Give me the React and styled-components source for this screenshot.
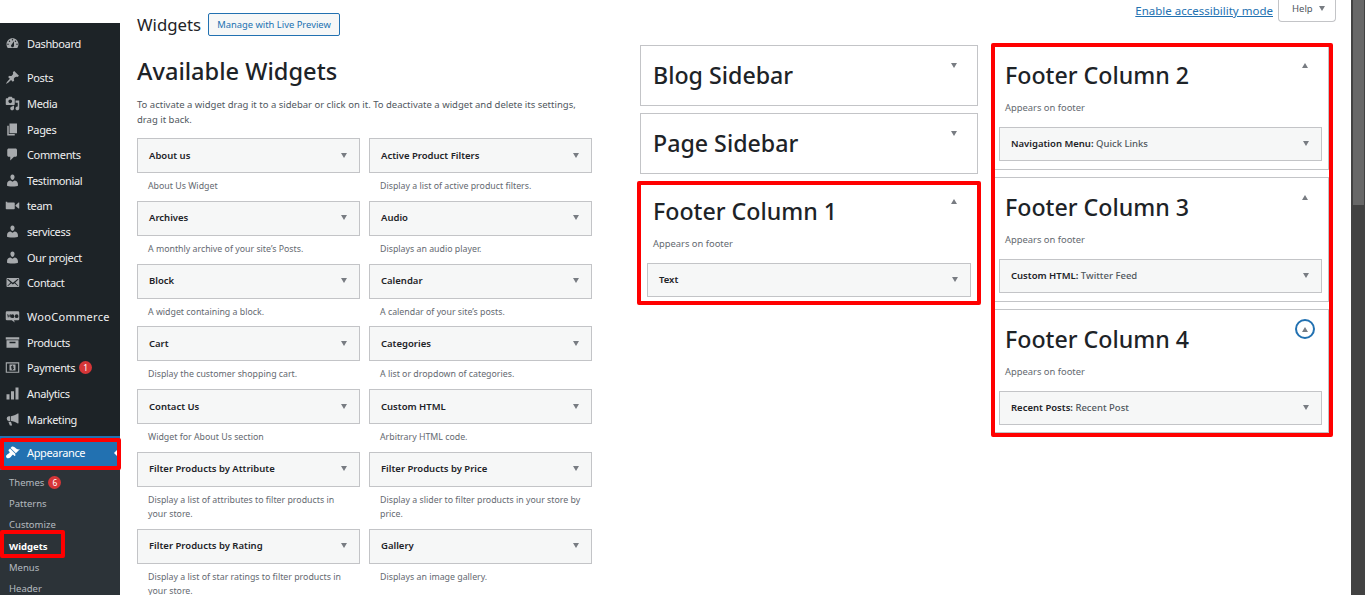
import React from "react";
import styled, { createGlobalStyle } from "styled-components";

const FONT = `"Noto Sans", "Liberation Sans", sans-serif`;

const Global = createGlobalStyle`
  html, body { margin: 0; padding: 0; height: 595px; overflow: hidden; background: #fff; }
  * { box-sizing: border-box; }
  body { font-family: ${FONT}; color: #1d2327; }
`;

const Page = styled.div`
  position: relative;
  display: flex;
  width: 1365px;
  height: 595px;
  overflow: hidden;
`;

const Sidebar = styled.nav`
  flex: 0 0 120px;
  margin-top: 23px;
  background: #1d2327;
  display: flex;
  flex-direction: column;
  padding-top: 8px;
  overflow: hidden;
`;

const MenuItem = styled.div`
  display: flex;
  flex-shrink: 0;
  align-items: center;
  height: ${p => (p.$active ? "34px" : "25.6px")};
  margin-top: ${p => (p.$gap ? p.$gap : 0)}px;
  padding-left: 5px;
  font-size: 11px;
  letter-spacing: ${p => p.$track ?? -0.35}px;
  color: ${p => (p.$active ? "#fff" : "#f0f0f1")};
  background: ${p => (p.$active ? "#2271b1" : "transparent")};
  position: relative;
  svg { flex: 0 0 15px; margin-right: 7px; fill: ${p => (p.$active ? "#fff" : "#a7aaad")}; }
`;

const ActiveArrow = styled.span`
  position: absolute;
  right: 0;
  top: 50%;
  margin-top: -6px;
  border: 6px solid transparent;
  border-right-color: #fff;
  border-left-width: 0;
`;

const Badge = styled.span`
  display: inline-flex;
  align-items: center;
  justify-content: center;
  width: 13px;
  height: 13px;
  margin-left: 4px;
  border-radius: 50%;
  background: #d63638;
  color: #fff;
  font-size: 8.5px;
  letter-spacing: 0;
`;

const Submenu = styled.div`
  flex: 0 0 auto;
  background: #2c3338;
  padding-top: 2px;
  min-height: 140px;
`;

const SubItem = styled.div`
  display: flex;
  align-items: center;
  height: 21.2px;
  padding-left: 9px;
  font-size: 9.5px;
  font-weight: ${p => (p.$current ? 700 : 400)};
  color: ${p => (p.$current ? "#fff" : "rgba(240,246,252,.7)")};
`;

const Main = styled.main`
  flex: 1;
  display: flex;
  min-width: 0;
  padding-left: 17px;
  position: relative;
`;

const LeftColumn = styled.section`
  flex: 0 0 455px;
`;

const PageHead = styled.header`
  display: flex;
  align-items: center;
  height: 36px;
  padding-top: 13px;
  gap: 7px;
`;

const PageTitle = styled.h1`
  margin: -1px 0 0;
  font-size: 16.8px;
  font-weight: 400;
`;

const LiveButton = styled.span`
  display: inline-flex;
  align-items: center;
  height: 23px;
  padding: 0 8px;
  border: 1px solid #2271b1;
  border-radius: 2px;
  background: #f6f7f7;
  color: #2271b1;
  font-size: 9.4px;
`;

const SectionTitle = styled.h2`
  margin: 18px 0 0;
  font-size: 23.6px;
  line-height: 34px;
  font-weight: 500;
`;

const Intro = styled.p`
  margin: 9px 0 11px;
  font-size: 9.5px;
  line-height: 15px;
  color: #50575e;
  width: 455px;
`;

const WidgetGrid = styled.div`
  display: grid;
  grid-template-columns: 223px 223px;
  column-gap: 9px;
`;

const WidgetCell = styled.div`
  height: ${p => (p.$tall ? "77px" : "62.8px")};
`;

const WidgetBar = styled.div`
  display: flex;
  align-items: center;
  justify-content: space-between;
  height: ${p => p.$h || 35}px;
  padding: 0 12px 1px 11px;
  background: #f6f7f7;
  border: 1px solid #c3c4c7;
  font-size: 9.5px;
  font-weight: 600;
  color: #1d2327;
`;

const WidgetInstance = styled.span`
  font-weight: 500;
  color: #50575e;
`;

const WidgetDesc = styled.p`
  margin: 6px 0 0;
  padding: 0 8px 0 11px;
  font-size: 8.8px;
  line-height: 14px;
  color: #646970;
`;

const Caret = styled.span`
  width: 0;
  height: 0;
  border-left: 3.5px solid transparent;
  border-right: 3.5px solid transparent;
  ${p => (p.$up ? "border-bottom: 5px solid #787c82;" : "border-top: 5px solid #787c82;")}
`;

const Areas = styled.section`
  display: flex;
  padding-top: 45px;
  gap: 14px;
  margin-left: 48px;
`;

const AreaColumn = styled.div`
  flex: 0 0 ${p => p.$w}px;
  display: flex;
  flex-direction: column;
  gap: 7px;
`;

const AreaBox = styled.div`
  position: relative;
  border: 1px solid #c3c4c7;
  height: ${p => p.$h}px;
  padding: 12px 6px 0;
`;

const AreaTitle = styled.h3`
  margin: 0;
  padding-left: 6px;
  font-size: 23.2px;
  line-height: 35px;
  font-weight: 500;
`;

const AreaDesc = styled.p`
  margin: 7px 0 0;
  padding-left: 6px;
  font-size: 9.4px;
  line-height: 15px;
  color: #646970;
`;

const AreaWidgets = styled.div`
  margin-top: 12px;
`;

const Toggle = styled.span`
  position: absolute;
  top: 9px;
  right: 13px;
  width: 20px;
  height: 20px;
  border-radius: 50%;
  display: flex;
  align-items: center;
  justify-content: center;
  border: ${p => (p.$focus ? "2px solid #2271b1" : "0")};
`;

const TopLinks = styled.div`
  position: absolute;
  top: 0;
  right: 29px;
  display: flex;
  gap: 5px;
`;

const A11yLink = styled.a`
  font-size: 11.5px;
  line-height: 22px;
  color: #2271b1;
  text-decoration: underline;
`;

const HelpTab = styled.span`
  display: flex;
  align-items: center;
  gap: 6px;
  width: 58px;
  height: 22px;
  padding: 0 0 4px 13px;
  border: 1px solid #c3c4c7;
  border-top: 0;
  border-radius: 0 0 4px 4px;
  font-size: 9.5px;
  color: #50575e;
`;

const Scrollbar = styled.div`
  position: absolute;
  top: 0;
  right: 0;
  bottom: 0;
  width: 14px;
  background: #424242;
`;

const Thumb = styled.div`
  height: 205px;
  margin: 0 1px 0 2px;
  background: #686868;
`;

const Highlight = styled.div`
  position: absolute;
  left: ${p => p.$x}px;
  top: ${p => p.$y}px;
  width: ${p => p.$w}px;
  height: ${p => p.$h}px;
  border: 4px solid #f00;
  border-radius: 2px;
  pointer-events: none;
`;

const Ic = ({ d, children }) => (
  <svg width="15" height="15" viewBox="0 0 20 20">
    {d ? <path d={d} /> : children}
  </svg>
);

const PERSON = "M10 9.25c-2.27 0-2.73-3.44-2.73-3.44C7 4.02 7.82 2 9.97 2c2.16 0 2.98 2.02 2.71 3.81 0 0-.41 3.44-2.68 3.44zm0 2.57L12.72 10c2.39 0 4.52 2.33 4.52 4.53v2.49s-3.65 1.13-7.24 1.13c-3.65 0-7.24-1.13-7.24-1.13v-2.49c0-2.25 1.94-4.48 4.47-4.48z";

const ICONS = {
  dashboard: <Ic d="M3.76 16h12.48c1.1-1.37 1.76-3.11 1.76-5 0-4.42-3.58-8-8-8s-8 3.58-8 8c0 1.89.66 3.63 1.76 5zM10 4c.55 0 1 .45 1 1s-.45 1-1 1-1-.45-1-1 .45-1 1-1zM6 6c.55 0 1 .45 1 1s-.45 1-1 1-1-.45-1-1 .45-1 1-1zm8 0c.55 0 1 .45 1 1s-.45 1-1 1-1-.45-1-1 .45-1 1-1zm-5.37 5.55L12 7v6c0 1.1-.9 2-2 2s-2-.9-2-2c0-.57.24-1.08.63-1.45zM4 10c.55 0 1 .45 1 1s-.45 1-1 1-1-.45-1-1 .45-1 1-1zm12 0c.55 0 1 .45 1 1s-.45 1-1 1-1-.45-1-1 .45-1 1-1z" />,
  pin: <Ic d="M10.44 3.02l1.82-1.82 6.36 6.35-1.83 1.82c-1.05-.68-2.48-.57-3.41.36l-.75.75c-.92.93-1.04 2.35-.35 3.41l-1.83 1.82-2.41-2.41-2.8 2.79c-.42.42-3.38 2.71-3.8 2.29s1.86-3.39 2.28-3.81l2.79-2.79L4.1 9.36l1.83-1.82c1.05.69 2.48.57 3.4-.36l.75-.75c.93-.92 1.05-2.35.36-3.41z" />,
  media: <Ic d="M13 11V4c0-.55-.45-1-1-1h-1.67L9 1H5L3.67 3H2c-.55 0-1 .45-1 1v7c0 .55.45 1 1 1h10c.55 0 1-.45 1-1zM7 4.5c1.38 0 2.5 1.12 2.5 2.5S8.38 9.5 7 9.5 4.5 8.38 4.5 7 5.62 4.5 7 4.5zM14 6h5v10.5c0 1.38-1.12 2.5-2.5 2.5S14 17.88 14 16.5s1.12-2.5 2.5-2.5c.17 0 .34.02.5.05V9h-3V6zm-4 8.05V13h2v3.5c0 1.38-1.12 2.5-2.5 2.5S7 17.88 7 16.5 8.12 14 9.5 14c.17 0 .34.02.5.05z" />,
  page: <Ic d="M6 15V2h10v13H6zm-1 1h8v2H3V5h2v11z" />,
  comment: <Ic d="M5 2h9c1.1 0 2 .9 2 2v7c0 1.1-.9 2-2 2h-2l-5 5v-5H5c-1.1 0-2-.9-2-2V4c0-1.1.9-2 2-2z" />,
  person: <Ic d={PERSON} />,
  video: <Ic d="M1 5h2v1h9c.6 0 1 .4 1 1v7c0 .6-.4 1-1 1H2c-.6 0-1-.4-1-1zM14 9.5l4-3.5h1v8h-1l-4-3.5z" />,
  mail: <Ic d="M19 14.5v-9c0-.83-.67-1.5-1.5-1.5H3.49c-.83 0-1.5.67-1.5 1.5v9c0 .83.67 1.5 1.5 1.5H17.5c.83 0 1.5-.67 1.5-1.5zm-1.31-9.11c.33.33.15.67-.03.84L13.6 9.95l3.9 4.06c.12.14.2.36.06.51-.13.16-.43.15-.56.05l-4.37-3.73-2.14 1.95-2.13-1.95-4.37 3.73c-.13.1-.43.11-.56-.05-.14-.15-.06-.37.06-.51l3.9-4.06-4.06-3.72c-.18-.17-.36-.51-.03-.84s.67-.17.95.07l6.24 5.04 6.25-5.04c.28-.24.62-.4.95-.07z" />,
  woo: <Ic d="M2.5 3h15A1.5 1.5 0 0 1 19 4.500v9a1.500 1.500 0 0 1-1.500 1.500H12l1 3-4-3H2.500A1.500 1.500 0 0 1 1 13.500v-9A1.500 1.500 0 0 1 2.500 3zM3 7l1 5 1.500-3L7 12l1-5H7l-.5 2.500L5.500 7h-.300l-1 2.500L4 7zm7 0a2.500 2.500 0 1 0 0 5 2.500 2.500 0 0 0 0-5zm5.500 0a2.500 2.500 0 1 0 0 5 2.500 2.500 0 0 0 0-5z" />,
  archive: <Ic d="M1 3h18v3H1zM2 7h16v10H2zm4 2v2h8V9z" />,
  money: <Ic d="M1 3h18v14H1zm1.500 1.500v11h15v-11zM6 6h8v8H6zm3.500 1v.700c-1 .2-1.500.8-1.500 1.500s.6 1.100 1.500 1.300v1.200c-.4-.1-.8-.3-1-.6l-.5.600c.3.400.8.700 1.500.800v.700h1v-.700c1-.2 1.500-.8 1.500-1.500s-.6-1.100-1.500-1.300V8.500c.3.100.6.200.8.400l.5-.6c-.3-.3-.8-.6-1.300-.6V7z" />,
  chart: <Ic d="M2 11h4v7H2zM8 7h4v11H8zM14 2h4v16h-4z" />,
  megaphone: <Ic d="M18 2v13l-1 .3c-3-2-6-3-9-3.300V5.500c3-.3 6-1.300 9-3.500zM7 5.500V12H5a3.300 3.300 0 0 1 0-6.500zM4.500 13H8l1.500 5h-3z" />,
  brush: <Ic d="M14.48 11.06L7.41 3.99l1.5-1.5c.5-.56 2.3-.47 3.51.32 1.21.8 1.43 1.28 2.91 2.1 1.18.64 2.45 1.26 4.45.85zm-.71.71L6.7 4.7 4.93 6.47c-.39.39-.39 1.02 0 1.41l1.06 1.06c.39.39.39 1.03 0 1.42-.6.6-1.43 1.11-2.21 1.69-.35.26-.7.53-1.01.84C1.43 13.23.78 15.6 2.19 17s3.77.75 5.12-.6c.31-.31.58-.66.85-1.01.57-.78 1.08-1.61 1.69-2.21.39-.39 1.02-.39 1.41 0l1.06 1.06c.39.39 1.02.39 1.41 0z" />,
};

const MENU = [
  { label: "Dashboard", icon: "dashboard" },
  { label: "Posts", icon: "pin", gap: 8.5 },
  { label: "Media", icon: "media" },
  { label: "Pages", icon: "page" },
  { label: "Comments", icon: "comment" },
  { label: "Testimonial", icon: "person" },
  { label: "team", icon: "video" },
  { label: "servicess", icon: "person" },
  { label: "Our project", icon: "person" },
  { label: "Contact", icon: "mail" },
  { label: "WooCommerce", icon: "woo", gap: 8.5, track: 0.3 },
  { label: "Products", icon: "archive" },
  { label: "Payments", icon: "money", badge: 1 },
  { label: "Analytics", icon: "chart" },
  { label: "Marketing", icon: "megaphone" },
  { label: "Appearance", icon: "brush", active: true, gap: 4 },
];

const SUBMENU = [
  { label: "Themes", badge: 6 },
  { label: "Patterns" },
  { label: "Customize" },
  { label: "Widgets", current: true },
  { label: "Menus" },
  { label: "Header" },
];

const WIDGETS = [
  ["About us", "About Us Widget"],
  ["Active Product Filters", "Display a list of active product filters."],
  ["Archives", "A monthly archive of your site’s Posts."],
  ["Audio", "Displays an audio player."],
  ["Block", "A widget containing a block."],
  ["Calendar", "A calendar of your site’s posts."],
  ["Cart", "Display the customer shopping cart."],
  ["Categories", "A list or dropdown of categories."],
  ["Contact Us", "Widget for About Us section"],
  ["Custom HTML", "Arbitrary HTML code."],
  ["Filter Products by Attribute", "Display a list of attributes to filter products in your store.", true],
  ["Filter Products by Price", "Display a slider to filter products in your store by price.", true],
  ["Filter Products by Rating", "Display a list of star ratings to filter products in your store.", true],
  ["Gallery", "Displays an image gallery.", true],
];

const Area = ({ title, h, open, focus, name, instance }) => (
  <AreaBox $h={h}>
    <AreaTitle>{title}</AreaTitle>
    <Toggle $focus={focus}><Caret $up={open} /></Toggle>
    {open && (
      <>
        <AreaDesc>Appears on footer</AreaDesc>
        <AreaWidgets>
          <WidgetBar $h={34}>
            <span>{name}{instance && <>: <WidgetInstance>{instance}</WidgetInstance></>}</span>
            <Caret />
          </WidgetBar>
        </AreaWidgets>
      </>
    )}
  </AreaBox>
);

export default function App() {
  return (
    <>
      <Global />
      <Page>
        <Sidebar>
          {MENU.map(m => (
            <MenuItem key={m.label} $gap={m.gap} $active={m.active} $track={m.track}>
              {ICONS[m.icon]}
              <span>{m.label}</span>
              {m.badge && <Badge>{m.badge}</Badge>}
              {m.active && <ActiveArrow />}
            </MenuItem>
          ))}
          <Submenu>
            {SUBMENU.map(s => (
              <SubItem key={s.label} $current={s.current}>
                {s.label}
                {s.badge && <Badge>{s.badge}</Badge>}
              </SubItem>
            ))}
          </Submenu>
        </Sidebar>
        <Main>
          <LeftColumn>
            <PageHead>
              <PageTitle>Widgets</PageTitle>
              <LiveButton>Manage with Live Preview</LiveButton>
            </PageHead>
            <SectionTitle>Available Widgets</SectionTitle>
            <Intro>To activate a widget drag it to a sidebar or click on it. To deactivate a widget and delete its settings, drag it back.</Intro>
            <WidgetGrid>
              {WIDGETS.map(([name, desc, tall]) => (
                <WidgetCell key={name} $tall={tall}>
                  <WidgetBar>
                    <span>{name}</span>
                    <Caret />
                  </WidgetBar>
                  <WidgetDesc>{desc}</WidgetDesc>
                </WidgetCell>
              ))}
            </WidgetGrid>
          </LeftColumn>
          <Areas>
            <AreaColumn $w={338}>
              <Area title="Blog Sidebar" h={61} />
              <Area title="Page Sidebar" h={61} />
              <Area title="Footer Column 1" h={124} open name="Text" />
            </AreaColumn>
            <AreaColumn $w={337}>
              <Area title="Footer Column 2" h={125} open name="Navigation Menu" instance="Quick Links" />
              <Area title="Footer Column 3" h={125} open name="Custom HTML" instance="Twitter Feed" />
              <Area title="Footer Column 4" h={124} open focus name="Recent Posts" instance="Recent Post" />
            </AreaColumn>
          </Areas>
          <TopLinks>
            <A11yLink>Enable accessibility mode</A11yLink>
            <HelpTab>Help <Caret /></HelpTab>
          </TopLinks>
        </Main>
        <Scrollbar><Thumb /></Scrollbar>
        <Highlight $x={0} $y={438} $w={121} $h={32} />
        <Highlight $x={0} $y={530} $w={65} $h={28} />
        <Highlight $x={637} $y={181} $w={344} $h={124} />
        <Highlight $x={991} $y={43} $w={342} $h={394} />
      </Page>
    </>
  );
}
